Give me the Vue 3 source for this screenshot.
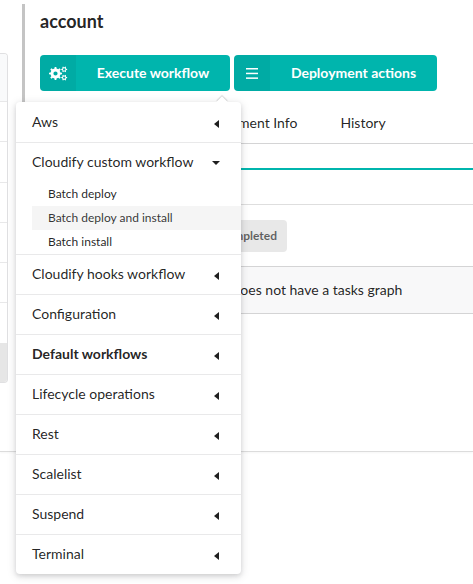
<script setup>
const before = ['Aws']
const subs = ['Batch deploy', 'Batch deploy and install', 'Batch install']
const after = [
  { name: 'Cloudify hooks workflow' },
  { name: 'Configuration' },
  { name: 'Default workflows', bold: true },
  { name: 'Lifecycle operations' },
  { name: 'Rest' },
  { name: 'Scalelist' },
  { name: 'Suspend' },
  { name: 'Terminal' }
]

function gear(cx, cy, outer, inner, hole, teeth) {
  const step = (Math.PI * 2) / teeth
  const pts = []
  for (let i = 0; i < teeth; i++) {
    const a = i * step
    const w = step * 0.2
    const corners = [
      [a - w * 1.35, inner],
      [a - w * 0.8, outer],
      [a + w * 0.8, outer],
      [a + w * 1.35, inner]
    ]
    for (const [t, r] of corners) {
      pts.push(`${(cx + r * Math.cos(t)).toFixed(2)} ${(cy + r * Math.sin(t)).toFixed(2)}`)
    }
  }
  const ring = `M${cx - hole} ${cy}a${hole} ${hole} 0 1 0 ${hole * 2} 0a${hole} ${hole} 0 1 0 ${-hole * 2} 0z`
  return `M${pts.join('L')}z${ring}`
}

const gears = [
  gear(6.5, 7.5, 6.6, 5, 2.1, 8),
  gear(15.2, 3.4, 3, 2.2, 1.2, 6),
  gear(15.2, 11.6, 3, 2.2, 1.2, 6)
]
</script>

<template>
  <div class="page">
    <div class="frame">
      <aside class="stub">
        <div class="stub-head"></div>
        <div class="stub-row"></div>
        <div class="stub-row"></div>
        <div class="stub-row"></div>
        <div class="stub-row"></div>
        <div class="stub-row"></div>
        <div class="stub-row"></div>
        <div class="stub-foot"></div>
      </aside>
      <div class="divider"></div>
      <main class="main">
        <h1 class="title">account</h1>
        <div class="actions">
          <button class="btn btn-exec">
            <span class="btn-icon">
              <svg width="19" height="15" viewBox="0 0 19 15" fill="#fff">
                <path v-for="(d, i) in gears" :key="i" :d="d" fill-rule="evenodd" />
              </svg>
            </span>
            <span class="btn-label">Execute workflow</span>
          </button>
          <button class="btn btn-deploy">
            <span class="btn-icon">
              <svg width="12" height="11" viewBox="0 0 12 11" fill="#fff">
                <rect x="0" y="0" width="12" height="1.5" />
                <rect x="0" y="4.7" width="12" height="1.5" />
                <rect x="0" y="9.4" width="12" height="1.5" />
              </svg>
            </span>
            <span class="btn-label">Deployment actions</span>
          </button>
        </div>
        <nav class="tabs">
          <span class="tab">Deployment Info</span>
          <span class="tab">History</span>
        </nav>
        <div class="accent-band"></div>
        <div class="status-row">
          <span class="status">Completed</span>
        </div>
        <div class="message">This deployment does not have a tasks graph</div>
      </main>
    </div>

    <div class="menu">
      <span class="pointer"></span>
      <div v-for="m in before" :key="m" class="item">
        <span>{{ m }}</span><i class="caret-left"></i>
      </div>
      <div class="group">
        <div class="group-head">
          <span>Cloudify custom workflow</span><i class="caret-down"></i>
        </div>
        <div
          v-for="s in subs"
          :key="s"
          class="sub"
          :class="{ hovered: s === 'Batch deploy and install' }"
        >{{ s }}</div>
      </div>
      <div v-for="m in after" :key="m.name" class="item" :class="{ bold: m.bold }">
        <span>{{ m.name }}</span><i class="caret-left"></i>
      </div>
    </div>
  </div>
</template>

<style>
html, body { margin: 0; background: #fff; }
</style>

<style scoped>
.page {
  position: relative;
  width: 473px;
  height: 584px;
  overflow: hidden;
  background: #fff;
  font-family: Lato, "Open Sans", sans-serif;
  color: rgba(0, 0, 0, 0.87);
}
.frame {
  display: flex;
  height: 452px;
  box-sizing: border-box;
  border-bottom: 1px solid #dcdcdc;
  box-shadow: 0 1px 2px rgba(0, 0, 0, 0.04);
}
.stub {
  flex: none;
  box-sizing: border-box;
  width: 8px;
  height: 330px;
  margin-top: 53px;
  border: 1px solid #e0e0e2;
  border-left: 0;
  border-radius: 0 4px 4px 0;
  overflow: hidden;
}
.stub-head { height: 47px; background: #f9fafb; }
.stub-row { box-sizing: border-box; height: 40.3px; border-top: 1px solid #e8e8e9; }
.stub-foot { height: 40px; background: #e6e6e6; }
.divider {
  flex: none;
  width: 3px;
  height: 446px;
  margin: 4px 0 0 14px;
  background: #c4c4c4;
}
.main {
  flex: 1;
  min-width: 0;
  padding-left: 15px;
}
.title {
  margin: 0;
  padding-top: 10px;
  height: 55px;
  box-sizing: border-box;
  font-size: 18px;
  line-height: 22px;
  font-weight: 700;
}
.actions {
  display: flex;
  gap: 4px;
}
.btn {
  display: flex;
  align-items: stretch;
  height: 36px;
  padding: 0;
  border: 0;
  border-radius: 4px;
  overflow: hidden;
  background: #00b5ad;
  color: #fff;
  font-family: inherit;
  font-size: 14px;
  font-weight: 700;
}
.btn-exec { width: 190px; }
.btn-deploy { width: 203px; }
.btn-icon {
  flex: none;
  display: flex;
  align-items: center;
  justify-content: center;
  width: 36px;
  background: rgba(0, 0, 0, 0.05);
}
.btn-label {
  flex: 1;
  display: flex;
  align-items: center;
  justify-content: center;
  padding-bottom: 2px;
}
.tabs {
  display: flex;
  gap: 43px;
  height: 53px;
  box-sizing: border-box;
  padding: 10px 0 0 154px;
  align-items: center;
  border-bottom: 1px solid #d4d4d5;
  font-size: 14px;
}
.accent-band {
  height: 61px;
  box-sizing: border-box;
  border-top: 24px solid transparent;
  border-bottom: 1px solid #dedede;
}
.accent-band::before {
  content: "";
  display: block;
  height: 2px;
  background: #00b5ad;
}
.status-row {
  height: 61px;
  box-sizing: border-box;
  padding: 15px 0 0 150px;
}
.status {
  display: inline-block;
  box-sizing: border-box;
  width: 97px;
  height: 32px;
  line-height: 32px;
  padding-right: 10px;
  text-align: right;
  border-radius: 4px;
  background: #e8e8e8;
  color: rgba(0, 0, 0, 0.6);
  font-size: 12px;
  font-weight: 700;
}
.message {
  height: 48px;
  box-sizing: border-box;
  padding-left: 87px;
  line-height: 46px;
  background: #f8f8f9;
  border-top: 1px solid #d4d4d5;
  border-bottom: 1px solid #d4d4d5;
  font-size: 14px;
  white-space: nowrap;
}
.menu {
  position: absolute;
  left: 16px;
  top: 102px;
  width: 225px;
  height: 472px;
  box-sizing: border-box;
  padding-top: 1px;
  background: #fff;
  border-radius: 4px;
  box-shadow: 0 2px 4px rgba(34, 36, 38, 0.12), 0 2px 10px rgba(34, 36, 38, 0.15);
  font-size: 14px;
}
.pointer {
  position: absolute;
  left: 202px;
  top: -4px;
  width: 8px;
  height: 8px;
  background: #fff;
  transform: rotate(45deg);
  box-shadow: -1px -1px 1px rgba(34, 36, 38, 0.18);
}
.item, .group-head {
  display: flex;
  align-items: center;
  justify-content: space-between;
  box-sizing: border-box;
  height: 40px;
  padding: 0 22px 0 16px;
  border-bottom: 1px solid #e9e9ea;
}
.item span, .group-head span { transform: translateY(-1px); }
.item:last-child { border-bottom: 0; height: 39px; }
.item.bold { font-weight: 700; }
.group { border-bottom: 1px solid #e9e9ea; height: 112px; box-sizing: border-box; }
.group-head { border-bottom: 0; height: 39px; }
.sub {
  height: 24px;
  line-height: 24px;
  margin-left: 16px;
  padding-left: 16px;
  font-size: 12px;
}
.sub.hovered {
  background: #f5f5f5;
  color: rgba(0, 0, 0, 0.8);
}
.caret-left {
  width: 0;
  height: 0;
  margin-top: 2px;
  border-top: 4px solid transparent;
  border-bottom: 4px solid transparent;
  border-right: 5px solid #1f1f1f;
}
.caret-down {
  width: 0;
  height: 0;
  margin-top: 1px;
  margin-right: -1px;
  border-left: 4px solid transparent;
  border-right: 4px solid transparent;
  border-top: 4px solid #1f1f1f;
}
</style>
